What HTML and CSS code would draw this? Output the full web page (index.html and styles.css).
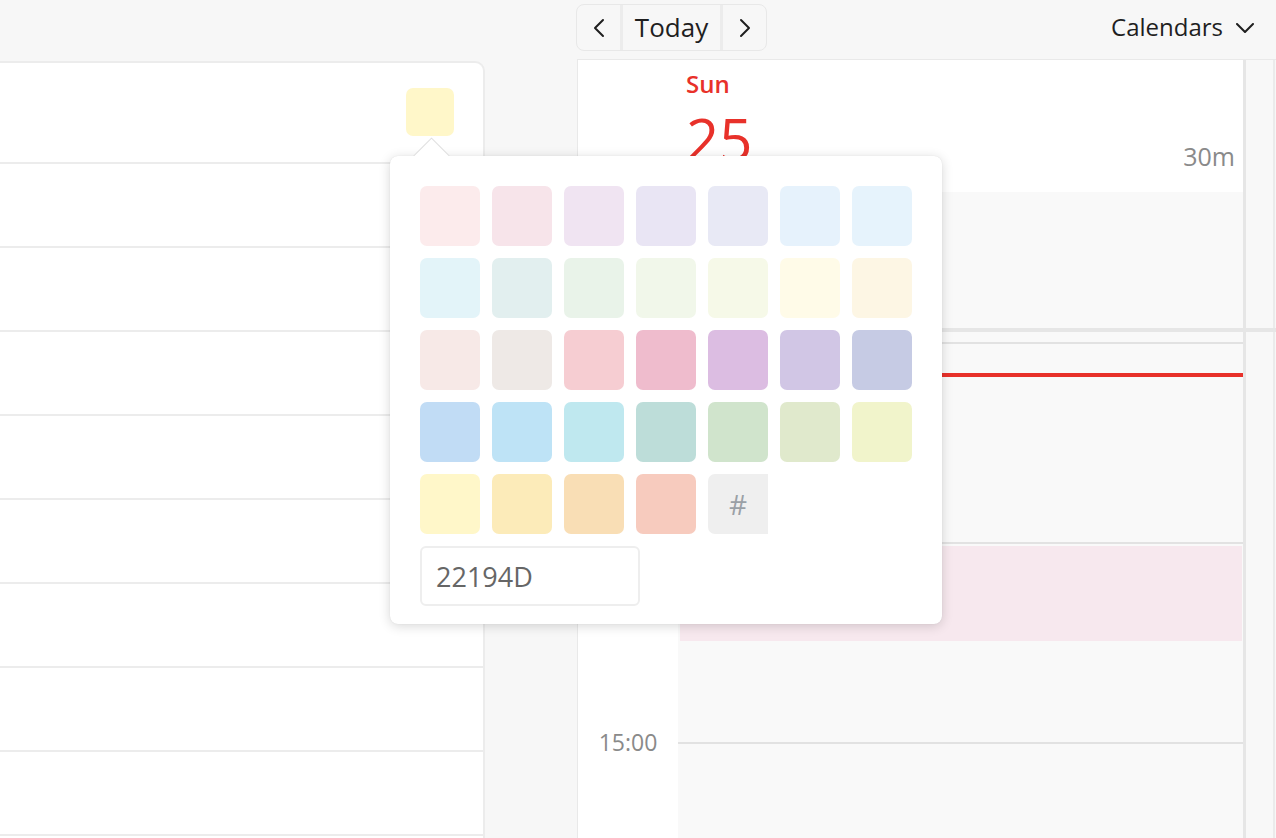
FILE: index.html
```html
<!DOCTYPE html>
<html lang="en">
<head>
<meta charset="utf-8">
<title>Calendar</title>
<link rel="stylesheet" href="styles.css">
</head>
<body>
<header class="topbar">
  <div class="topbar-spacer"></div>
  <div class="nav-group">
    <button class="nav-btn nav-arrow" aria-label="Previous">
      <svg width="12" height="20" viewBox="0 0 12 20"><path d="M10 2 L2 10 L10 18" fill="none" stroke="#1f1f1f" stroke-width="2" stroke-linecap="round" stroke-linejoin="round"/></svg>
    </button>
    <button class="nav-btn nav-today">Today</button>
    <button class="nav-btn nav-arrow" aria-label="Next">
      <svg width="12" height="20" viewBox="0 0 12 20"><path d="M2 2 L10 10 L2 18" fill="none" stroke="#1f1f1f" stroke-width="2" stroke-linecap="round" stroke-linejoin="round"/></svg>
    </button>
  </div>
  <div class="topbar-right">
    <button class="cal-menu">Calendars
      <svg width="18" height="10" viewBox="0 0 18 10"><path d="M1 1 L9 9 L17 1" fill="none" stroke="#1f1f1f" stroke-width="2" stroke-linecap="round" stroke-linejoin="round"/></svg>
    </button>
  </div>
</header>

<main class="main">
  <section class="list-card">
    <div class="list-row list-row-first"><div class="color-chip"></div></div>
    <div class="list-row"></div>
    <div class="list-row"></div>
    <div class="list-row"></div>
    <div class="list-row"></div>
    <div class="list-row"></div>
    <div class="list-row"></div>
    <div class="list-row"></div>
    <div class="list-row"></div>
  </section>

  <section class="calendar">
    <div class="cal-head">
      <div class="gutter-cell"></div>
      <div class="day-title">
        <div class="day-date">
          <div class="dow">Sun</div>
          <div class="dnum">25</div>
        </div>
        <div class="duration">30m</div>
      </div>
      <div class="track-cell"></div>
      <div class="gutter-cell"></div>
      <div class="allday"></div>
      <div class="track-cell"></div>
    </div>
    <div class="cal-body">
      <div class="gutter">
        <div class="gutter-row"><span class="time-label">13:00</span></div>
        <div class="gutter-row"><span class="time-label">14:00</span></div>
        <div class="gutter-row"><span class="time-label">15:00</span></div>
      </div>
      <div class="day-col">
        <div class="hour-row"></div>
        <div class="hour-row"></div>
        <div class="hour-row"></div>
        <div class="now-line"></div>
        <div class="event"></div>
      </div>
      <div class="track-cell"></div>
    </div>
  </section>
</main>

<div class="popover">
  <div class="popover-arrow"><div class="popover-arrow-square"></div></div>
  <div class="swatches">
    <div class="swatch" style="background:#fcebec"></div>
    <div class="swatch" style="background:#f7e4ea"></div>
    <div class="swatch" style="background:#f0e4f2"></div>
    <div class="swatch" style="background:#e9e5f4"></div>
    <div class="swatch" style="background:#e8e9f5"></div>
    <div class="swatch" style="background:#e6f2fc"></div>
    <div class="swatch" style="background:#e6f3fc"></div>

    <div class="swatch" style="background:#e3f4f9"></div>
    <div class="swatch" style="background:#e2efef"></div>
    <div class="swatch" style="background:#e9f3e9"></div>
    <div class="swatch" style="background:#f1f7ea"></div>
    <div class="swatch" style="background:#f6f9e8"></div>
    <div class="swatch" style="background:#fffbe8"></div>
    <div class="swatch" style="background:#fdf6e4"></div>

    <div class="swatch" style="background:#f7e9e7"></div>
    <div class="swatch" style="background:#eee9e6"></div>
    <div class="swatch" style="background:#f6cdd2"></div>
    <div class="swatch" style="background:#efbccd"></div>
    <div class="swatch" style="background:#dcbde2"></div>
    <div class="swatch" style="background:#d1c6e5"></div>
    <div class="swatch" style="background:#c6cbe4"></div>

    <div class="swatch" style="background:#c1dcf5"></div>
    <div class="swatch" style="background:#bee3f6"></div>
    <div class="swatch" style="background:#bfe8ef"></div>
    <div class="swatch" style="background:#bdddd9"></div>
    <div class="swatch" style="background:#d0e4cc"></div>
    <div class="swatch" style="background:#e0e9cc"></div>
    <div class="swatch" style="background:#f1f4cb"></div>

    <div class="swatch" style="background:#fff7c9"></div>
    <div class="swatch" style="background:#fcebb9"></div>
    <div class="swatch" style="background:#f9deb5"></div>
    <div class="swatch" style="background:#f7cbbe"></div>
    <div class="swatch swatch-custom">#</div>
  </div>
  <input class="hex-input" type="text" value="22194D">
</div>
</body>
</html>
```

FILE: styles.css
```css
* {
  box-sizing: border-box;
}

html, body {
  margin: 0;
  padding: 0;
}

body {
  width: 1276px;
  height: 838px;
  overflow: hidden;
  position: relative;
  background: #f7f7f7;
  font-family: "Open Sans", "Noto Sans", sans-serif;
  color: #1f1f1f;
}

/* ---------- top bar ---------- */
.topbar {
  height: 59px;
  display: grid;
  grid-template-columns: 576px auto 1fr;
  align-items: start;
}

.nav-group {
  margin-top: 4px;
  height: 47px;
  display: flex;
  border: 1px solid #e8e8e8;
  border-radius: 8px;
  overflow: hidden;
}

.nav-btn {
  background: transparent;
  border: none;
  margin: 0;
  padding: 0;
  font-family: inherit;
  color: #1f1f1f;
  display: flex;
  align-items: center;
  justify-content: center;
}

.nav-arrow {
  width: 43px;
}

.nav-today {
  width: 103px;
  border-left: 3px solid #ececec;
  border-right: 3px solid #ececec;
  font-size: 26px;
  padding-bottom: 2px;
}

.topbar-right {
  justify-self: end;
  padding-right: 22px;
  margin-top: 4px;
  height: 47px;
  display: flex;
  align-items: center;
}

.cal-menu {
  background: transparent;
  border: none;
  padding: 0;
  font-family: inherit;
  font-size: 24px;
  color: #1f1f1f;
  display: flex;
  align-items: center;
  gap: 13px;
  padding-bottom: 2px;
}

.cal-menu svg {
  margin-top: 2px;
}

/* ---------- main ---------- */
.main {
  display: flex;
  height: 779px;
  overflow: hidden;
}

.list-card {
  margin-left: -20px;
  margin-top: 2px;
  width: 505px;
  flex: none;
  background: #fff;
  border: 2px solid #ececec;
  border-bottom: none;
  border-radius: 0 10px 0 0;
}

.list-row {
  height: 84px;
  border-bottom: 2px solid #ececec;
}

.list-row-first {
  height: 101px;
  display: flex;
  justify-content: flex-end;
  align-items: flex-start;
  padding: 25px 29px 0 0;
}

.color-chip {
  width: 48px;
  height: 48px;
  border-radius: 7px;
  background: #fff7c9;
}

/* ---------- calendar ---------- */
.calendar {
  margin-left: 92px;
  flex: 1;
  border-top: 1px solid #e9e9e9;
  border-left: 1px solid #e9e9e9;
  display: flex;
  flex-direction: column;
}

.cal-head {
  display: grid;
  grid-template-columns: 100px 568px 29px;
  grid-template-rows: 132px 136px;
  border-bottom: 4px solid #e6e6e6;
}

.gutter-cell {
  background: #fff;
}

.track-cell {
  background: #f8f8f8;
  border-right: 2px solid #ebebeb;
}

.day-title {
  background: #fff;
  border-right: 3px solid #e6e6e6;
  display: flex;
  justify-content: space-between;
  padding: 8px 8px 0 8px;
}

.dow {
  font-size: 24px;
  line-height: 32px;
  font-weight: 600;
  color: #e8312a;
}

.dnum {
  margin-top: 10px;
  font-size: 58px;
  line-height: 58px;
  font-weight: 400;
  color: #e8312a;
}

.duration {
  align-self: flex-end;
  font-size: 25px;
  line-height: 32px;
  color: #8a8a8a;
  margin-bottom: 20px;
}

.allday {
  background: #f9f9f9;
  border-right: 3px solid #e6e6e6;
}

.cal-body {
  flex: 1;
  display: grid;
  grid-template-columns: 100px 568px 29px;
}

.gutter {
  background: #fff;
  padding-top: 10px;
}

.gutter-row {
  height: 200px;
  display: flex;
  justify-content: center;
}

.time-label {
  margin-top: -12px;
  font-size: 23px;
  line-height: 24px;
  height: 24px;
  color: #8a8a8a;
}

.day-col {
  position: relative;
  background: #f9f9f9;
  border-right: 3px solid #e6e6e6;
  padding-top: 10px;
}

.hour-row {
  height: 200px;
  border-top: 2px solid #e2e2e2;
}

.now-line {
  position: absolute;
  left: 0;
  right: 0;
  top: 41px;
  height: 4px;
  background: #e8312a;
}

.event {
  position: absolute;
  left: 2px;
  right: 1px;
  top: 214px;
  height: 95px;
  background: #f7e8ee;
}

/* ---------- colour popover ---------- */
.popover {
  position: absolute;
  left: 390px;
  top: 156px;
  width: 552px;
  padding: 30px 30px 18px;
  background: #fff;
  border-radius: 8px;
  box-shadow: 0 2px 12px rgba(0, 0, 0, 0.16), 0 0 1px rgba(0, 0, 0, 0.12);
}

.popover-arrow {
  position: absolute;
  left: 21px;
  top: -20px;
  width: 40px;
  height: 20px;
  overflow: hidden;
}

.popover-arrow-square {
  position: absolute;
  left: 6.5px;
  top: 6.5px;
  width: 27px;
  height: 27px;
  background: #fff;
  border: 1px solid #dedede;
  transform: rotate(45deg);
}

.swatches {
  display: grid;
  grid-template-columns: repeat(7, 60px);
  grid-auto-rows: 60px;
  gap: 12px;
}

.swatch {
  border-radius: 7px;
}

.swatch-custom {
  background: #efefef;
  border-radius: 7px 0 0 7px;
  color: #9aa0a6;
  font-size: 28px;
  display: flex;
  align-items: center;
  justify-content: center;
}

.hex-input {
  display: block;
  margin-top: 12px;
  width: 220px;
  height: 60px;
  border: 2px solid #eeeeee;
  border-radius: 6px;
  padding: 0 0 0 14px;
  font-family: inherit;
  font-size: 27px;
  color: #666;
  background: #fff;
  outline: none;
}
```
